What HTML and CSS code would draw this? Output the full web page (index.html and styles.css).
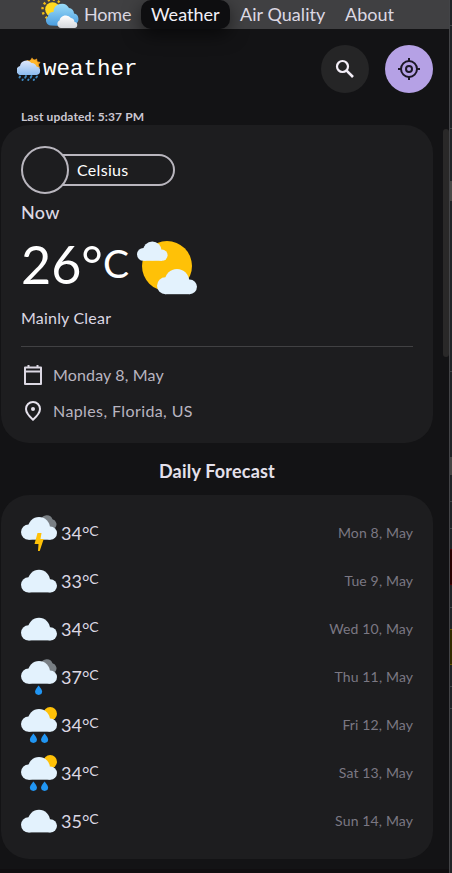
FILE: index.html
```html
<!DOCTYPE html>
<html lang="en">
<head>
<meta charset="utf-8">
<title>Weather</title>
<link rel="stylesheet" href="styles.css">
</head>
<body>
<svg class="defs" aria-hidden="true">
  <defs>
    <linearGradient id="blue" x1="0" y1="0" x2="0" y2="1"><stop offset="0" stop-color="#9bdcf8"/><stop offset="1" stop-color="#4a9de0"/></linearGradient>
    <linearGradient id="pale" x1="0" y1="0" x2="0" y2="1"><stop offset="0" stop-color="#dfe8fa"/><stop offset="1" stop-color="#8cbcf0"/></linearGradient>
    <linearGradient id="white" x1="0" y1="0" x2="0" y2="1"><stop offset="0" stop-color="#ffffff"/><stop offset="1" stop-color="#d5d8dd"/></linearGradient>
    <g id="cloud"><circle cx="7.600" cy="15.100" r="7.600"/><circle cx="18" cy="11" r="11"/><circle cx="29.400" cy="16.100" r="6.600"/><path d="M7.600 12H29.400V22.700H7.600Z"/></g>
    <path id="drop" d="M0 0Q3.500 4 3.500 6A3.500 3.300 0 0 1-3.500 6Q-3.500 4 0 0Z"/>
    <symbol id="cloudy" viewBox="0 0 36 36"><use href="#cloud" y="6.700" fill="#e3f2fd"/></symbol>
    <symbol id="storm" viewBox="0 0 36 36">
      <path d="M20 5A6 6 0 0 1 31.500 4.300A5.200 5.200 0 0 1 34 13L26 12Z" fill="#797f84"/>
      <use href="#cloud" y="2" fill="#e3f2fd"/>
      <path d="M16.500 18H20.500L19.500 24H22.700L18.700 36H17L17.500 29H13.500Z" fill="#ffc107"/>
    </symbol>
    <symbol id="rain" viewBox="0 0 36 36">
      <path d="M20 5A6 6 0 0 1 31.500 4.300A5.200 5.200 0 0 1 34 13L26 12Z" fill="#797f84"/>
      <use href="#cloud" y="2" fill="#e3f2fd"/>
      <use href="#drop" x="17.600" y="26.600" fill="#2196f3"/>
    </symbol>
    <symbol id="showers" viewBox="0 0 36 36">
      <circle cx="29.200" cy="6.800" r="6.800" fill="#ffc107"/>
      <use href="#cloud" y="2" fill="#e3f2fd"/>
      <use href="#drop" x="12.400" y="26.600" fill="#2196f3"/>
      <use href="#drop" x="23.600" y="26.600" fill="#2196f3"/>
    </symbol>
  </defs>
</svg>
<div class="window">
<div class="app">
  <nav class="nav">
    <svg class="nav-logo" width="38" height="29" viewBox="0 0 38 29">
      <circle cx="11.500" cy="9.500" r="10" fill="none" stroke="#f2bd16" stroke-width="2.400" stroke-dasharray="2.200 3.036"/>
      <circle cx="11.500" cy="9.500" r="7.300" fill="#ffd91f"/>
      <path d="M10 25.500A5 5 0 0 1 7 16.500A5 5 0 0 1 12.500 12A8.300 8.300 0 0 1 28 8A5.500 5.500 0 0 1 33 13.500A5.500 5.500 0 0 1 34 24L20 26Z" fill="url(#blue)"/>
      <path d="M20 28A4 4 0 0 1 18.500 20.500A6.500 6.500 0 0 1 30 18A4.500 4.500 0 0 1 33.500 22A3 3 0 0 1 33 28Z" fill="url(#white)"/>
    </svg>
    <a class="link home">Home</a><a class="link active">Weather</a><a class="link air">Air Quality</a><a class="link about">About</a>
  </nav>
  <header class="header">
    <div class="brand">
      <svg width="24" height="24" viewBox="0 0 24 24">
        <path d="M15 0.500L17 3L20 1.500L20.500 4.500L23.500 5L21.700 8L23 10.500L20.500 12L12 7L9.500 3L13 3.500Z" fill="#e79a22"/>
        <circle cx="16" cy="7.500" r="5" fill="#ffb629"/>
        <path d="M5 18A4.500 4.500 0 0 1 3 9A6.500 6.500 0 0 1 14.500 6A5 5 0 0 1 19.500 9.500A4.300 4.300 0 0 1 19.500 18Z" fill="url(#pale)"/>
        <path d="M3 19.500L2.500 20.500M9 19L8.200 20.700M14.500 19L13.700 20.700M20 19.500L19.300 20.500M5.800 22.500L5.500 23M11.500 22.500L11.200 23M17 22.500L16.700 23" stroke="#3d87bd" stroke-width="1.900" stroke-linecap="round"/>
      </svg>
      <span class="brand-name">weather</span>
    </div>
    <button class="round"><svg width="24" height="24" viewBox="0 0 24 24" fill="none" stroke="#f4eff8" stroke-width="2.200"><circle cx="9.500" cy="9.500" r="5.500"/><path d="M13.600 13.600L20 20" stroke-width="2.600"/></svg></button>
    <button class="round locate"><svg width="24" height="24" viewBox="0 0 24 24" fill="none" stroke="#1c1726" stroke-width="2"><circle cx="12" cy="12" r="8"/><circle cx="12" cy="12" r="3"/><path d="M12 1V4M12 20V23M1 12H4M20 12H23"/></svg></button>
  </header>
  <main class="content">
    <p class="updated">Last updated: 5:37 PM</p>
    <section class="card now">
      <div class="toggle"><span class="knob"></span><span class="pill"><span class="unit">Celsius</span></span></div>
      <h2 class="now-title">Now</h2>
      <div class="temp">
        <span class="degrees">26°</span><span class="degree-unit">C</span>
        <svg class="sky" width="60" height="60" viewBox="0 0 60 60"><circle cx="30" cy="28" r="25" fill="#ffc107"/><use href="#cloud" transform="translate(0 3.500) scale(.85)" fill="#e3f2fd"/><use href="#cloud" transform="translate(20 31) scale(1.110)" fill="#e3f2fd"/></svg>
      </div>
      <p class="condition">Mainly Clear</p>
      <ul class="meta">
        <li><svg width="24" height="24" viewBox="0 0 24 24" fill="none" stroke="#dcd8e3" stroke-width="2"><path d="M4 4.500H20V21H4Z" stroke-linejoin="round"/><path d="M4 8.500H20M7.500 2V5M16.500 2V5"/></svg><span class="date">Monday 8, May</span></li>
        <li><svg width="24" height="24" viewBox="0 0 24 24" fill="none" stroke="#e5e1ec" stroke-width="2"><path d="M12 20.700C7.500 16.700 5 13.200 5 10A7 7 0 0 1 19 10C19 13.200 16.500 16.700 12 20.700Z"/><circle cx="12" cy="10" r="2" fill="#e5e1ec" stroke="none"/></svg><span class="place">Naples, Florida, US</span></li>
      </ul>
    </section>
    <h2 class="forecast-title"><span>Daily Forecast</span></h2>
    <ul class="card forecast">
      <li><svg><use href="#storm"/></svg><span class="t">34°<sup>C</sup></span><span class="d">Mon 8, May</span></li>
      <li><svg><use href="#cloudy"/></svg><span class="t">33°<sup>C</sup></span><span class="d">Tue 9, May</span></li>
      <li><svg><use href="#cloudy"/></svg><span class="t">34°<sup>C</sup></span><span class="d">Wed 10, May</span></li>
      <li><svg><use href="#rain"/></svg><span class="t">37°<sup>C</sup></span><span class="d">Thu 11, May</span></li>
      <li><svg><use href="#showers"/></svg><span class="t">34°<sup>C</sup></span><span class="d">Fri 12, May</span></li>
      <li><svg><use href="#showers"/></svg><span class="t">34°<sup>C</sup></span><span class="d">Sat 13, May</span></li>
      <li><svg><use href="#cloudy"/></svg><span class="t">35°<sup>C</sup></span><span class="d">Sun 14, May</span></li>
    </ul>
  </main>
  <div class="scrollbar"></div>
</div>
<aside class="edge"></aside>
</div>
</body>
</html>
```
FILE: styles.css
```css
* { box-sizing: border-box; margin: 0; padding: 0; }
body { background: #131315; color: #dcd8e3; font-family: Lato, "Noto Sans", sans-serif; overflow: hidden; }
.defs { position: absolute; width: 0; height: 0; }
.window { display: flex; width: 452px; height: 873px; }
.app { position: relative; flex: 1; height: 873px; background: #131315; border-bottom: 4px solid #100e10; }
.edge {
  width: 3px;
  border-left: 1px solid #434447;
  background: linear-gradient(#202326 0 25px, #404346 25px 26px, #202326 26px 128px, #404346 128px 129px, #202326 129px 181px, #494846 181px 201px, #202326 201px 371px, #404346 371px 372px, #202326 372px 457px, #454443 457px 475px, #202326 475px 501px, #404346 501px 502px, #202326 502px 528px, #404346 528px 529px, #202326 529px 549px, #500000 549px 550px, #290000 550px 584px, #500000 584px 585px, #202326 585px 607px, #404346 607px 608px, #202326 608px 629px, #665500 629px 630px, #332b00 630px 664px, #665500 664px 665px, #202326 665px 686px, #404346 686px 687px, #202326 687px 708px, #404346 708px 709px, #202326 709px);
}

.nav { display: flex; height: 29px; padding-left: 41px; background: #404042; font-size: 18px; line-height: 28px; }
.nav-logo { flex: none; }
.link { flex: none; height: 29px; white-space: nowrap; }
.home { width: 62px; padding-left: 5px; letter-spacing: -.2px; }
.active { width: 89px; padding-left: 10px; border-radius: 10px; background: #0e0e10; color: #f3f0f8; box-shadow: 0 6px 18px rgba(0, 0, 0, .55); }
.air { padding-left: 10px; width: 105px; letter-spacing: .05px; }
.about { padding-left: 10px; }

.header { display: flex; align-items: center; gap: 16px; height: 80px; padding: 0 16px 0 17px; }
.brand { display: flex; align-items: center; flex: 1; gap: 2px; }
.brand-name { font: 22.500px/24px "Liberation Mono", monospace; color: #fff; }
.round { display: flex; align-items: center; justify-content: center; width: 48px; height: 48px; border: 0; border-radius: 50%; background: #252526; }
.locate { background: #b5a1e5; }

.content { padding: 0 16px 0 1px; }
.updated { height: 16px; padding-left: 20px; font-size: 12px; font-weight: 700; letter-spacing: .12px; line-height: 16px; color: #cbc7d1; }
.card { border-radius: 28px; background: #1d1d1f; padding: 20px; list-style: none; }
.now { height: 318px; }
.toggle { display: flex; align-items: center; height: 48px; margin-top: 1px; }
.knob { z-index: 1; width: 48px; height: 48px; border: 2px solid #b9b6be; border-radius: 50%; background: #1d1d1f; }
.pill { width: 130px; height: 32px; margin-left: -24px; padding-left: 30px; border: 2px solid #b9b6be; border-radius: 16px; font-size: 16px; letter-spacing: .3px; line-height: 28px; color: #fff; }
.now-title { height: 36px; font-size: 18px; font-weight: 500; letter-spacing: .3px; line-height: 36px; }
.temp { display: flex; height: 70px; color: #fff; }
.degrees { width: 82px; font-size: 52px; line-height: 68px; }
.degree-unit { width: 34px; font-size: 39px; line-height: 66px; }
.sky { margin-top: 8px; }
.condition { height: 46px; font-size: 16px; letter-spacing: .2px; line-height: 36px; }
.meta { padding-top: 16px; border-top: 1px solid #414143; list-style: none; }
.meta li { display: flex; align-items: center; gap: 8px; height: 24px; margin-bottom: 12px; font-size: 16px; line-height: 22px; color: #b9b5c0; }
.meta span { margin-bottom: 1px; }
.date { letter-spacing: .15px; }
.place { letter-spacing: .4px; }
.forecast-title { height: 52px; text-align: center; font-size: 18px; font-weight: 700; letter-spacing: .2px; line-height: 56px; color: #e5e1ec; }
.forecast { display: flex; flex-direction: column; gap: 12px; height: 364px; }
.forecast li { display: flex; align-items: center; height: 36px; }
.forecast svg { width: 36px; height: 36px; flex: none; }
.t { flex: 1; margin-left: 4px; font-size: 18px; line-height: 36px; }
.t sup { font-size: 14px; line-height: 0; vertical-align: 4px; }
.d { margin-bottom: 2px; margin-right: -.2px; font-size: 14px; letter-spacing: .15px; color: #7b7883; }
.scrollbar { position: absolute; top: 129px; right: 0; width: 6px; height: 228px; border-radius: 3px; background: #292828; }
```
